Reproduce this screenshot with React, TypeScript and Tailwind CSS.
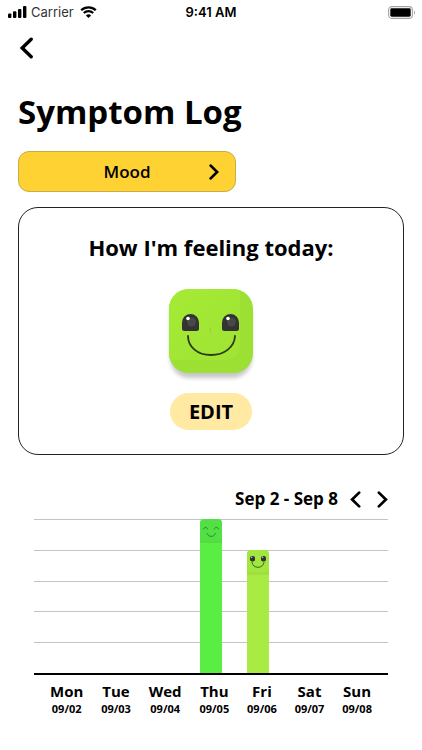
import React, { useState } from "react";

type IconProps = { className?: string };

type Day = {
  name: string;
  date: string;
  // mood level from 0 to 5
  level: number;
};

const days: Day[] = [
  { name: "Mon", date: "09/02", level: 0 },
  { name: "Tue", date: "09/03", level: 0 },
  { name: "Wed", date: "09/04", level: 0 },
  { name: "Thu", date: "09/05", level: 5 },
  { name: "Fri", date: "09/06", level: 4 },
  { name: "Sat", date: "09/07", level: 0 },
  { name: "Sun", date: "09/08", level: 0 },
];

const gridLines = [0, 1, 2, 3, 4];

function ChevronLeft({ className }: IconProps) {
  return (
    <svg viewBox="0 0 12 20" fill="none" className={className} aria-hidden="true">
      <path d="M10.3 1.9 2 10l8.3 8.1" stroke="currentColor" strokeWidth="3.2" strokeLinecap="round" />
    </svg>
  );
}

function ChevronRight({ className }: IconProps) {
  return (
    <svg viewBox="0 0 12 20" fill="none" className={className} aria-hidden="true">
      <path d="M1.7 1.9 10 10l-8.3 8.1" stroke="currentColor" strokeWidth="3.2" strokeLinecap="round" />
    </svg>
  );
}

function StatusBar() {
  return (
    <div className="grid grid-cols-3 items-center h-6 px-2 font-['Inter','Liberation_Sans',sans-serif]">
      <div className="flex items-center">
        <svg width="19" height="12" viewBox="0 0 19 12" aria-hidden="true">
          <rect x="0" y="7.5" width="3.4" height="4.5" rx="1" />
          <rect x="5" y="5.3" width="3.4" height="6.7" rx="1" />
          <rect x="10" y="3" width="3.4" height="9" rx="1" />
          <rect x="15" y="0" width="3.4" height="12" rx="1" />
        </svg>
        <span className="ml-1 text-[13px] leading-4 text-[#333]">Carrier</span>
        <svg width="17" height="12" viewBox="0 0 17 12" fill="none" className="ml-1.5" aria-hidden="true">
          <path d="M1.2 4.3a10.4 10.4 0 0 1 14.6 0" stroke="#000" strokeWidth="2.3" />
          <path d="M3.8 7.1a6.7 6.7 0 0 1 9.4 0" stroke="#000" strokeWidth="2.1" />
          <path d="M8.5 12 5.9 9.4a3.8 3.8 0 0 1 5.2 0z" fill="#000" />
        </svg>
      </div>
      <span className="text-center text-[13px] leading-4 font-semibold">9:41 AM</span>
      <svg width="26" height="13" viewBox="0 0 26 13" fill="none" className="justify-self-end overflow-visible" aria-hidden="true">
        <rect x="0.6" y="0.6" width="23.8" height="11.8" rx="3.4" stroke="#a3a3a3" strokeWidth="1.1" />
        <rect x="2.3" y="2.3" width="20.4" height="8.4" rx="1.4" fill="#000" />
        <path d="M26 4.5c1.3.4 1.3 3.6 0 4z" fill="#a3a3a3" />
      </svg>
    </div>
  );
}

function GoodFace() {
  return (
    <svg width="96" height="98" viewBox="0 0 96 98" fill="none" role="img" aria-label="Good">
      <defs>
        <filter id="faceShadow" x="-10%" y="-10%" width="120%" height="125%">
          <feGaussianBlur stdDeviation="2" />
        </filter>
        <linearGradient id="faceInner" x1="0" y1="0" x2="1" y2="1">
          <stop offset="0" stopColor="#a4ea36" />
          <stop offset="1" stopColor="#a1e434" />
        </linearGradient>
        <clipPath id="faceClip">
          <rect x="6" y="4" width="84" height="84" rx="20" />
        </clipPath>
      </defs>
      <rect x="7" y="10" width="82" height="83" rx="20" fill="#000" opacity="0.22" filter="url(#faceShadow)" />
      <g clipPath="url(#faceClip)">
        <rect x="6" y="4" width="84" height="84" fill="#9be033" />
        <path d="M6 4h71v54c0 11-6 17-17 17H6z" fill="url(#faceInner)" />
      </g>
      <path d="M19 37.5a8.5 8.5 0 0 1 17 0v6a2.5 2.5 0 0 1-2.5 2.5h-12a2.5 2.5 0 0 1-2.5-2.5z" fill="#333" />
      <path d="M59 37.5a8.5 8.5 0 0 1 17 0v6a2.5 2.5 0 0 1-2.5 2.5h-12a2.5 2.5 0 0 1-2.500-2.5z" fill="#333" />
      <circle cx="28.5" cy="37" r="4.5" fill="#484848" />
      <circle cx="68.5" cy="37" r="4.5" fill="#484848" />
      <circle cx="25" cy="33.5" r="1.8" fill="#fff" />
      <circle cx="65" cy="33.5" r="1.8" fill="#fff" />
      <path d="M47.5 42.5 47 48" stroke="#93d42f" strokeWidth="1" />
      <path d="M25 51c0 11 9.5 19 23 19s23.5-8 24-19" stroke="#2c3a17" strokeWidth="1.8" strokeLinecap="round" />
    </svg>
  );
}

function GoodCap() {
  return (
    <svg viewBox="0 0 22 25" fill="none" className="block w-full" aria-hidden="true">
      <path d="M0 18h22v5q0 2-3 2H3q-3 0-3-2z" fill="#000" opacity="0.05" />
      <rect x="0" y="0" width="22" height="22" rx="4" fill="#a2e640" />
      <rect x="3" y="6" width="5" height="5.5" rx="2" fill="#333" />
      <rect x="14" y="6" width="5" height="5.5" rx="2" fill="#333" />
      <circle cx="4.7" cy="7.3" r="0.7" fill="#ddd" />
      <circle cx="15.7" cy="7.3" r="0.7" fill="#ddd" />
      <path d="M5 12.5c.4 3 3 4.800 6 4.800s5.6-1.8 6-4.8" stroke="#3c5216" strokeWidth="0.9" strokeLinecap="round" />
    </svg>
  );
}

function GreatCap() {
  return (
    <svg viewBox="0 0 22 25" fill="none" className="block w-full" aria-hidden="true">
      <path d="M0 18h22v4q0 2-3 2H3q-3 0-3-2z" fill="#000" opacity="0.07" />
      <rect x="0" y="0" width="22" height="22" rx="4" fill="#53e045" />
      <path d="M3.5 10c.5-2.3 3.5-2.3 4.2 0M14.3 10c.5-2.3 3.5-2.3 4.2 0" stroke="#2b7a29" strokeWidth="0.9" strokeLinecap="round" />
      <path d="M7 14.5c1.8 4 6.7 4 8.5 0" stroke="#2b7a29" strokeWidth="0.9" strokeLinecap="round" />
    </svg>
  );
}

function MoodBar({ level }: { level: number }) {
  if (level === 0) return <div />;

  const great = level === 5;
  return (
    <div
      className={`w-[22px] self-end justify-self-center rounded-t-[5px] ${great ? "bg-[#5aed43]" : "bg-[#a9eb43]"}`}
      style={{ height: `${(level / 5) * 100}%` }}
    >
      {great ? <GreatCap /> : <GoodCap />}
    </div>
  );
}

export default function App() {
  const [range] = useState("Sep 2 - Sep 8");

  return (
    <div className="min-h-screen bg-white pb-8 text-black font-['Open_Sans','Noto_Sans',sans-serif]">
      <StatusBar />

      <main className="px-[18px]">
        <button type="button" aria-label="Back" className="mt-3 flex h-6 w-6 items-center">
          <ChevronLeft className="ml-0.5 h-[22px] w-[13px]" />
        </button>

        <h1 className="mt-8 text-[33px] leading-10 font-bold">Symptom Log</h1>

        <button
          type="button"
          className="mt-[19px] grid h-[41px] w-[218px] grid-cols-[1fr_auto_1fr] items-center rounded-[11px] border border-[#c9ab48] bg-[#ffd233] px-4 text-[17px] font-semibold"
        >
          <span className="col-start-2">Mood</span>
          <ChevronRight className="h-4 w-[10px] justify-self-end" />
        </button>

        <section className="mt-[15px] flex flex-col items-center rounded-[20px] border border-[#222] pt-[23px] pb-6">
          <h2 className="text-[22px] leading-8 font-bold">How I'm feeling today:</h2>
          <div className="mt-[22px]">
            <GoodFace />
          </div>
          <button type="button" className="mt-[10px] h-[37px] w-[82px] rounded-full bg-[#ffe9a3] text-xl font-bold">
            EDIT
          </button>
        </section>

        <section className="mx-4 mt-8">
          <div className="flex h-6 items-center justify-end">
            <span className="text-[17px] font-bold">{range}</span>
            <button type="button" aria-label="Previous week" className="ml-3">
              <ChevronLeft className="block h-[17px] w-[11px]" />
            </button>
            <button type="button" aria-label="Next week" className="ml-4">
              <ChevronRight className="block h-[17px] w-[11px]" />
            </button>
          </div>

          <div className="mt-2 grid h-[156px] border-b-2 border-black">
            <div className="col-start-1 row-start-1 grid grid-rows-5">
              {gridLines.map((line) => (
                <div key={line} className="border-t border-[#c4c4c4]" />
              ))}
            </div>
            <div className="col-start-1 row-start-1 grid h-[154px] grid-cols-7 px-[11px]">
              {days.map((day) => (
                <MoodBar key={day.date} level={day.level} />
              ))}
            </div>
          </div>

          <div className="mt-1.5 flex justify-between px-4">
            {days.map((day) => (
              <div key={day.date} className="flex flex-col items-center font-bold">
                <span className="text-[15px] leading-5">{day.name}</span>
                <span className="text-[11px] leading-4">{day.date}</span>
              </div>
            ))}
          </div>
        </section>
      </main>
    </div>
  );
}
